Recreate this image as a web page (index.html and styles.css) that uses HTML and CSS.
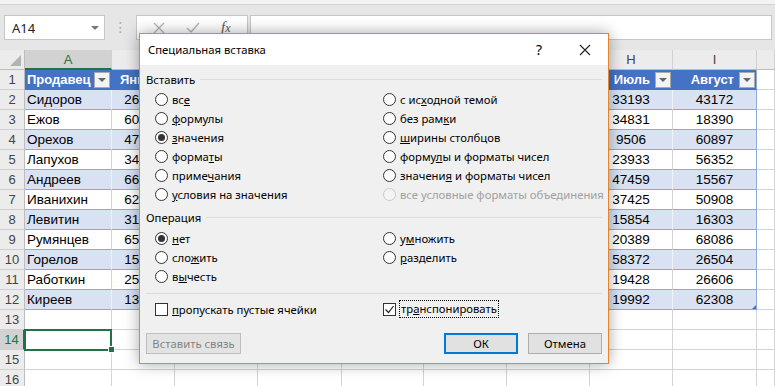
FILE: index.html
```html
<!DOCTYPE html>
<html lang="ru">

<head>
    <meta charset="UTF-8">
    <meta name="viewport" content="width=device-width, initial-scale=1.0">
    <title>Специальная вставка</title>

    <link rel="stylesheet" href="styles.css">

</head>

<body>

    <div class="app">
        <div class="title-edge"></div>

        <div class="formula-bar">
            <div class="name-box">
                <span>A14</span>
                <span class="caret"></span>
            </div>
            <div class="grip">⋮</div>
            <div class="fx-buttons">
                <svg width="12" height="12" viewBox="0 0 12 12">
                    <path d="M1 1 L11 11 M11 1 L1 11" stroke="#b3b3b3" stroke-width="1.3" fill="none" />
                </svg>
                <svg width="14" height="12" viewBox="0 0 14 12">
                    <path d="M1 6 L5 10 L13 1" stroke="#b3b3b3" stroke-width="1.3" fill="none" />
                </svg>
                <span class="fx">f<span class="fx-x">x</span></span>
            </div>
            <div class="formula-input"></div>
        </div>

        <div class="sheet" id="sheet"></div>

        <!-- Paste special dialog -->
        <div class="dialog">
            <div class="dialog-title">
                <span class="dialog-caption">Специальная вставка</span>
                <span class="dialog-help">?</span>
                <span class="dialog-close">
                    <svg width="12" height="12" viewBox="0 0 12 12">
                        <path d="M1 1 L11 11 M11 1 L1 11" stroke="#222" stroke-width="1.1" fill="none" />
                    </svg>
                </span>
            </div>

            <div class="dialog-body">
                <div class="group-title">Вставить</div>
                <div class="options six">
                    <label class="opt"><span class="radio"></span><span>вс<u>е</u></span></label>
                    <label class="opt"><span class="radio"></span><span><u>ф</u>ормулы</span></label>
                    <label class="opt"><span class="radio on"></span><span><u>з</u>начения</span></label>
                    <label class="opt"><span class="radio"></span><span>форма<u>т</u>ы</span></label>
                    <label class="opt"><span class="radio"></span><span>приме<u>ч</u>ания</span></label>
                    <label class="opt"><span class="radio"></span><span><u>у</u>словия на значения</span></label>
                    <label class="opt"><span class="radio"></span><span>с ис<u>х</u>одной темой</span></label>
                    <label class="opt"><span class="radio"></span><span>без рам<u>к</u>и</span></label>
                    <label class="opt"><span class="radio"></span><span><u>ш</u>ирины столбцов</span></label>
                    <label class="opt"><span class="radio"></span><span>форму<u>л</u>ы и форматы чисел</span></label>
                    <label class="opt"><span class="radio"></span><span>значени<u>я</u> и форматы чисел</span></label>
                    <label class="opt disabled"><span class="radio"></span><span>все условные форматы объединения</span></label>
                </div>

                <div class="group-title second">Операция</div>
                <div class="options three">
                    <label class="opt"><span class="radio on"></span><span><u>н</u>ет</span></label>
                    <label class="opt"><span class="radio"></span><span>сло<u>ж</u>ить</span></label>
                    <label class="opt"><span class="radio"></span><span>в<u>ы</u>честь</span></label>
                    <label class="opt"><span class="radio"></span><span>у<u>м</u>ножить</span></label>
                    <label class="opt"><span class="radio"></span><span><u>р</u>азделить</span></label>
                </div>

                <div class="sep"></div>

                <div class="checks">
                    <label class="opt"><span class="check"></span><span><u>п</u>ропускать пустые ячейки</span></label>
                    <label class="opt">
                        <span class="check">
                            <svg width="11" height="11" viewBox="0 0 11 11">
                                <path d="M1.5 5.5 L4.5 8.5 L9.5 2" stroke="#222" stroke-width="1.2" fill="none" />
                            </svg>
                        </span>
                        <span class="focus">тр<u>а</u>нспонировать</span>
                    </label>
                </div>

                <div class="buttons">
                    <button class="btn disabled">Вставить связь</button>
                    <button class="btn ok">ОК</button>
                    <button class="btn cancel">Отмена</button>
                </div>
            </div>
        </div>
    </div>

    <script>

        // Build the worksheet grid
        const sheet = document.getElementById("sheet");

        const letters = ["A", "B", "C", "D", "E", "F", "G", "H", "I", ""];
        const head = ["Продавец", "Январь", "Февраль", "Март", "Апрель", "Май", "Июнь", "Июль", "Август"];
        const rows = [
            ["Сидоров", 26418, 41207, 18355, 52901, 30744, 45120, 33193, 43172],
            ["Ежов", 60215, 23890, 47112, 15630, 61028, 28374, 34831, 18390],
            ["Орехов", 47390, 55163, 29048, 38215, 12977, 50416, 9506, 60897],
            ["Лапухов", 34712, 17684, 63529, 44102, 27365, 39851, 23933, 56352],
            ["Андреев", 66054, 30912, 21876, 58340, 46291, 13508, 47459, 15567],
            ["Иванихин", 62837, 48529, 35602, 19774, 53189, 24065, 37425, 50908],
            ["Левитин", 31560, 64281, 16935, 42718, 35406, 57293, 15854, 16303],
            ["Румянцев", 65123, 20457, 51380, 27649, 68012, 32981, 20389, 68086],
            ["Горелов", 15987, 39216, 44871, 61530, 22748, 46105, 58372, 26504],
            ["Работкин", 25341, 57802, 32694, 18263, 49517, 63840, 19428, 26606],
            ["Киреев", 13876, 42395, 60128, 35917, 17284, 29653, 19992, 62308]
        ];

        function cell(cls, html) {
            let d = document.createElement("div");
            d.className = "c " + cls;
            d.innerHTML = html || "";
            sheet.appendChild(d);
        }

        // column letters
        cell("corner");
        letters.forEach((l) => cell("colhead" + (l === "A" ? " active" : ""), l));

        // table header row
        cell("rowhead", "1");
        head.forEach((h, i) => {
            let cls = "th" + (i === 0 ? " first" : "") + (i === 8 ? " last" : "");
            cell(cls, '<span class="th-text">' + h + '</span><span class="filter"></span>');
        });
        cell("");

        // table data rows
        rows.forEach((r, n) => {
            cell("rowhead", n + 2);
            r.forEach((v, i) => {
                let cls = "td" + (n % 2 === 0 ? " band" : "") + (i === 0 ? " name" : " num");
                if (i === 8) cls += " last";
                if (i === 8 && n === rows.length - 1) cls += " resize";
                cell(cls, v);
            });
            cell("");
        });

        // empty rows below
        for (let n = 13; n <= 16; n++) {
            cell("rowhead" + (n === 14 ? " active" : ""), n);
            for (let i = 0; i < 10; i++) {
                cell(n === 14 && i === 0 ? "selected" : "");
            }
        }

    </script>
</body>

</html>
```

FILE: styles.css
```css
body {
    margin: 0;
    background-color: #fff;
    font-family: "Liberation Sans", Arial, sans-serif;
}

.app {
    position: relative;
    width: 775px;
    height: 386px;
    overflow: hidden;
}

.title-edge {
    height: 4px;
    background-color: #f3f3f3;
    border-bottom: 1px solid #d4d4d4;
}

/* formula bar */
.formula-bar {
    height: 45px;
    box-sizing: border-box;
    padding-top: 10px;
    background-color: #e6e6e6;
    display: flex;
    align-items: flex-start;
}

.name-box {
    margin-left: 4px;
    width: 101px;
    height: 25px;
    box-sizing: border-box;
    border: 1px solid #c6c6c6;
    background-color: #fff;
    display: flex;
    align-items: center;
    justify-content: space-between;
    padding: 0 5px 0 7px;
    font-family: "Noto Sans", sans-serif;
    font-size: 13px;
    color: #222;
}

.caret {
    width: 0;
    height: 0;
    border-left: 4px solid transparent;
    border-right: 4px solid transparent;
    border-top: 4px solid #777;
}

.grip {
    width: 31px;
    height: 25px;
    line-height: 25px;
    text-align: center;
    color: #a8a8a8;
    font-family: "DejaVu Sans", sans-serif;
    font-size: 14px;
}

.fx-buttons {
    width: 112px;
    height: 25px;
    box-sizing: border-box;
    border: 1px solid #c6c6c6;
    background-color: #fff;
    display: flex;
    align-items: center;
    justify-content: space-around;
    padding: 0 6px;
}

.fx {
    font-family: "Liberation Serif", serif;
    font-style: italic;
    font-size: 15px;
    color: #555;
}

.fx-x {
    font-size: 12px;
}

.formula-input {
    flex: 1;
    height: 25px;
    margin: 0 3px 0 2px;
    box-sizing: border-box;
    border: 1px solid #c6c6c6;
    background-color: #fff;
}

/* worksheet */
.sheet {
    display: grid;
    grid-template-columns: 25px 87px 63px 83px 84px 82px 83px 83px 83px 84px 1fr;
    grid-auto-rows: 20px;
}

.c {
    box-sizing: border-box;
    border-right: 1px solid #d4d4d4;
    border-bottom: 1px solid #d4d4d4;
    font-size: 13.5px;
    color: #000;
    display: flex;
    align-items: center;
    white-space: nowrap;
    overflow: hidden;
}

.corner {
    position: relative;
    background-color: #ececec;
    border-right-color: #bdbdbd;
    border-bottom-color: #bdbdbd;
}

.corner::after {
    content: "";
    position: absolute;
    right: 3px;
    bottom: 3px;
    border-left: 11px solid transparent;
    border-bottom: 11px solid #b4b4b4;
}

.colhead {
    background-color: #ececec;
    border-right-color: #d0d0d0;
    border-bottom-color: #bdbdbd;
    justify-content: center;
    color: #444;
    font-size: 13px;
}

.colhead.active {
    background-color: #d2d2d2;
    color: #217346;
    border-bottom: 2px solid #217346;
}

.rowhead {
    background-color: #ececec;
    border-right-color: #bdbdbd;
    border-bottom-color: #d0d0d0;
    justify-content: center;
    color: #444;
    font-size: 13px;
}

.rowhead.active {
    background-color: #d2d2d2;
    color: #217346;
    border-right: 2px solid #217346;
}

/* formatted table */
.th {
    background-color: #4472c4;
    border-right-color: #4472c4;
    border-bottom-color: #4472c4;
    color: #fff;
    font-weight: bold;
    font-size: 13px;
}

.th-text {
    flex: 1;
    overflow: hidden;
    text-align: right;
    padding-left: 8px;
}

.th.first .th-text {
    text-align: left;
    padding-left: 2px;
}

.filter {
    position: relative;
    flex: none;
    width: 16px;
    height: 16px;
    margin: 0 1px 0 5px;
    box-sizing: border-box;
    border: 1px solid #a9a9a9;
    background-color: #f3f3f3;
}

.th.first .filter {
    margin-left: 3px;
}

.filter::after {
    content: "";
    position: absolute;
    left: 3px;
    top: 5px;
    border-left: 4px solid transparent;
    border-right: 4px solid transparent;
    border-top: 4px solid #666;
}

.td {
    border-bottom-color: #8ea9db;
}

.band {
    background-color: #d9e1f2;
    border-right-color: #eef2f9;
}

.name {
    padding-left: 2px;
}

.num {
    justify-content: center;
}

.last,
.th.last {
    border-right-color: #8ea9db;
}

.resize {
    position: relative;
}

.resize::after {
    content: "";
    position: absolute;
    right: 0;
    bottom: 0;
    border-left: 4px solid transparent;
    border-bottom: 4px solid #4472c4;
}

.selected {
    position: relative;
    overflow: visible;
    z-index: 2;
}

.selected::before {
    content: "";
    position: absolute;
    left: -1px;
    top: -1px;
    right: -1px;
    bottom: -2px;
    border: 2px solid #217346;
}

.selected::after {
    content: "";
    position: absolute;
    right: -4px;
    bottom: -4px;
    width: 5px;
    height: 5px;
    background-color: #217346;
    border: 1px solid #fff;
}

/* dialog */
.dialog {
    position: absolute;
    left: 139px;
    top: 33px;
    width: 470px;
    height: 331px;
    box-sizing: border-box;
    border: 1px solid #e3862f;
    background-color: #f0f0f0;
    box-shadow: 0 0 14px rgba(0, 0, 0, 0.35);
    font-family: "Noto Sans", "Open Sans", sans-serif;
    font-size: 11.3px;
    color: #000;
    display: flex;
    flex-direction: column;
    z-index: 5;
}

.dialog-title {
    height: 31px;
    flex: none;
    background-color: #fff;
    display: flex;
    align-items: center;
    padding-left: 8px;
}

.dialog-caption {
    flex: 1;
}

.dialog-help {
    width: 46px;
    text-align: center;
    font-size: 14px;
}

.dialog-close {
    width: 46px;
    display: flex;
    justify-content: center;
}

.dialog-body {
    flex: 1;
    padding: 0 6px;
}

.group-title {
    height: 25px;
    box-sizing: border-box;
    padding-top: 3px;
    display: flex;
    align-items: center;
    gap: 5px;
}

.group-title::after {
    content: "";
    flex: 1;
    border-top: 1px solid #dcdcdc;
}

.group-title.second {
    padding-top: 1px;
}

.options {
    display: grid;
    grid-template-columns: 228px 1fr;
    grid-auto-flow: column;
    padding-left: 9px;
}

.options.six {
    grid-template-rows: repeat(6, 19px);
}

.options.three {
    grid-template-rows: repeat(3, 19px);
}

.opt {
    display: flex;
    align-items: center;
    gap: 4px;
    white-space: nowrap;
}

.opt u {
    text-underline-offset: 1px;
}

.radio {
    position: relative;
    flex: none;
    width: 13px;
    height: 13px;
    box-sizing: border-box;
    border: 1px solid #333;
    border-radius: 50%;
    background-color: #fff;
}

.radio.on::after {
    content: "";
    position: absolute;
    left: 2px;
    top: 2px;
    width: 7px;
    height: 7px;
    border-radius: 50%;
    background-color: #333;
}

.opt.disabled {
    color: #a0a0a0;
}

.opt.disabled .radio {
    border-color: #cacaca;
    background-color: #f4f4f4;
}

.sep {
    margin-top: 7px;
    border-top: 1px solid #dcdcdc;
}

.checks {
    height: 30px;
    display: grid;
    grid-template-columns: 228px 1fr;
    align-items: center;
    padding-left: 9px;
}

.check {
    flex: none;
    width: 13px;
    height: 13px;
    box-sizing: border-box;
    border: 1px solid #333;
    background-color: #fff;
    display: flex;
}

.focus {
    border: 1px dotted #000;
    padding: 0 1px 1px 1px;
    margin-left: -1px;
}

.buttons {
    margin-top: 9px;
    display: flex;
    height: 21px;
}

.btn {
    height: 21px;
    width: 74px;
    box-sizing: border-box;
    border: 1px solid #adadad;
    background-color: #e1e1e1;
    font-family: "Noto Sans", "Open Sans", sans-serif;
    font-size: 11.3px;
    color: #000;
    padding: 0;
}

.btn.disabled {
    width: 95px;
    color: #838383;
    border-color: #bfbfbf;
    background-color: #e3e3e3;
}

.btn.ok {
    margin-left: auto;
    border: 2px solid #0078d7;
}

.btn.cancel {
    margin-left: 10px;
}
```
